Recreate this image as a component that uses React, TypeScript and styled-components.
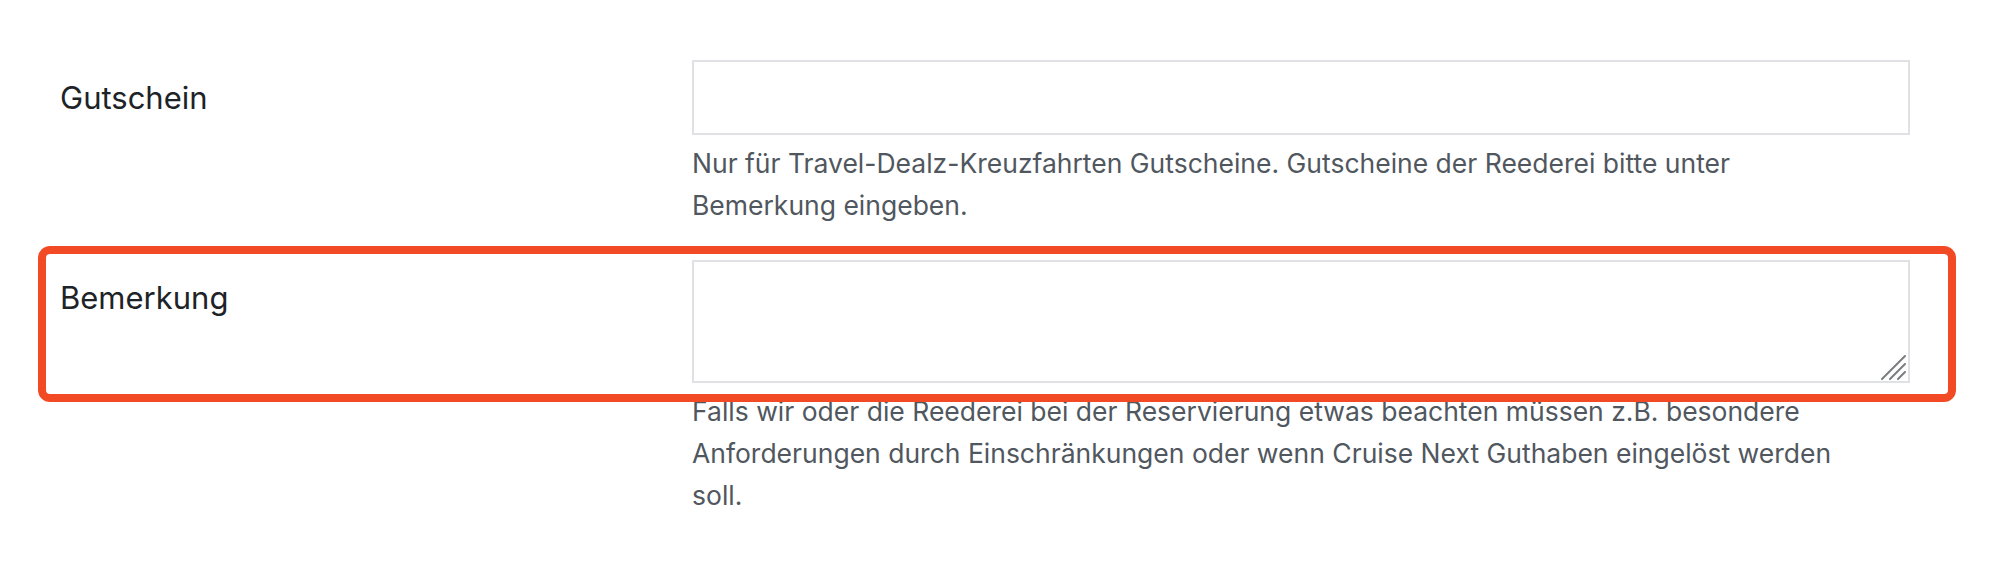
import React from 'react';
import styled, { createGlobalStyle } from 'styled-components';

const GlobalStyle = createGlobalStyle`
  html, body {
    margin: 0;
    padding: 0;
    background: #ffffff;
  }
  body {
    font-family: Inter, "Liberation Sans", Arial, sans-serif;
  }
`;

// help texts are kept in the lines the original form breaks them into
const FIELDS = [
  {
    id: 'gutschein',
    label: 'Gutschein',
    multiline: false,
    help: [
      'Nur für Travel-Dealz-Kreuzfahrten Gutscheine. Gutscheine der Reederei bitte unter',
      'Bemerkung eingeben.',
    ],
    highlight: false,
  },
  {
    id: 'bemerkung',
    label: 'Bemerkung',
    multiline: true,
    help: [
      'Falls wir oder die Reederei bei der Reservierung etwas beachten müssen z.B. besondere',
      'Anforderungen durch Einschränkungen oder wenn Cruise Next Guthaben eingelöst werden',
      'soll.',
    ],
    highlight: true,
  },
];

const ResizeGrip = () => (
  <Grip width="26" height="26" viewBox="0 0 26 26">
    <path d="M2 25 L25 2 M10 25 L25 10 M18 25 L25 18" stroke="#7b7d80" strokeWidth="2" strokeLinecap="round" />
  </Grip>
);

const App = () => {
  return (
    <Page>
      <GlobalStyle />
      <Form>
        {FIELDS.map((item) => (
          <Field key={item.id}>
            {item.highlight && <Highlight />}
            <Label htmlFor={item.id}>{item.label}</Label>
            <Control>
              {item.multiline ? (
                <>
                  <TextArea id={item.id} />
                  <ResizeGrip />
                </>
              ) : (
                <TextInput id={item.id} type="text" />
              )}
            </Control>
            <Help>
              {item.help.map((line) => (
                <HelpLine key={line}>{line}</HelpLine>
              ))}
            </Help>
          </Field>
        ))}
      </Form>
    </Page>
  );
};

export default App;

const Page = styled.div({
  width: '100%',
  minHeight: '588px',
  boxSizing: 'border-box',
  padding: '60px 0 0 60px',
  background: '#ffffff',
});

const Form = styled.div({
  display: 'flex',
  flexDirection: 'column',
  gap: '34px',
});

const Field = styled.div({
  display: 'grid',
  gridTemplateColumns: '632px 1218px',
  gridTemplateRows: 'auto auto',
  rowGap: '7px',
});

const Highlight = styled.div({
  gridColumn: '1 / -1',
  gridRow: '1',
  margin: '-14px -46px -19px -22px',
  border: '8px solid #f34a26',
  borderRadius: '12px',
  pointerEvents: 'none',
  zIndex: 1,
});

const Label = styled.label({
  gridColumn: '1',
  gridRow: '1',
  paddingTop: '17px',
  fontSize: '31px',
  lineHeight: '42px',
  color: '#1d2327',
});

const Control = styled.div({
  gridColumn: '2',
  gridRow: '1',
  position: 'relative',
  display: 'flex',
});

const TextInput = styled.input({
  width: '100%',
  height: '75px',
  boxSizing: 'border-box',
  border: '2px solid #dfe1e4',
  borderRadius: 0,
  outline: 'none',
  background: '#ffffff',
  padding: '0 14px',
  fontSize: '26px',
  fontFamily: 'inherit',
});

const TextArea = styled.textarea({
  width: '100%',
  height: '123px',
  boxSizing: 'border-box',
  border: '2px solid #dfe1e4',
  borderRadius: 0,
  outline: 'none',
  background: '#ffffff',
  resize: 'none',
  padding: '10px 14px',
  fontSize: '26px',
  fontFamily: 'inherit',
  display: 'block',
});

const Grip = styled.svg({
  position: 'absolute',
  right: '4px',
  bottom: '3px',
  pointerEvents: 'none',
});

const Help = styled.p({
  gridColumn: '2',
  gridRow: '2',
  margin: 0,
  fontSize: '26.5px',
  lineHeight: '42px',
  color: '#50575e',
});

const HelpLine = styled.span({
  display: 'block',
  whiteSpace: 'nowrap',
});
